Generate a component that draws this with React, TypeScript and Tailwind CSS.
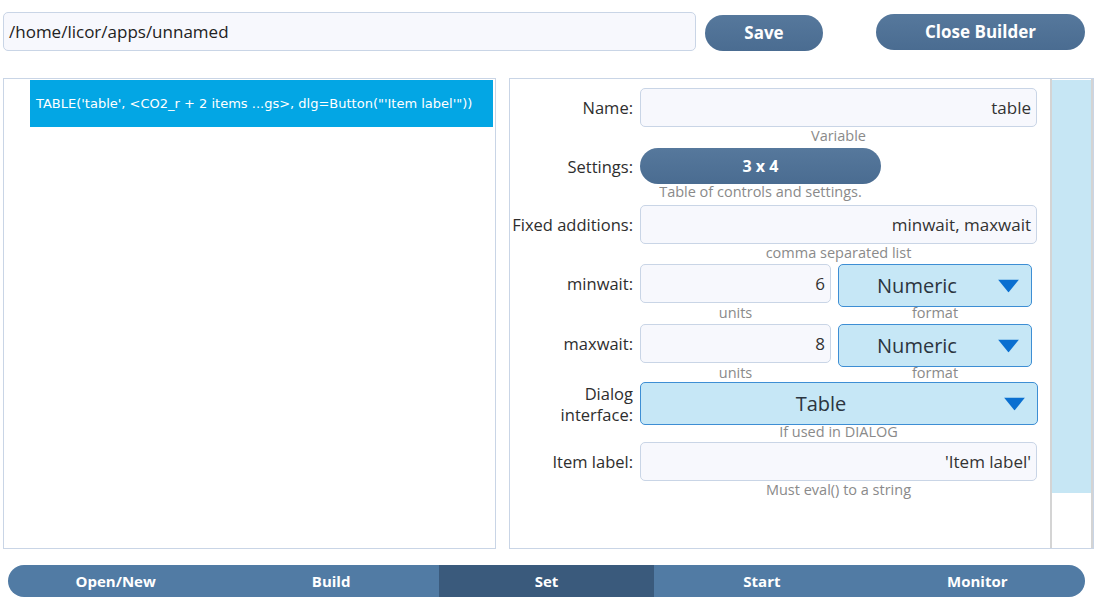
import React from 'react';

const font = { fontFamily: '"Open Sans", "Noto Sans", sans-serif' };

function Hint({ children, className = '' }: { children: React.ReactNode; className?: string }) {
  return <div className={`text-[14.5px] leading-[18px] text-[#8a8a8a] text-center whitespace-nowrap ${className}`}>{children}</div>;
}

function TextBox({ value, className = '' }: { value: string; className?: string }) {
  return (
    <div className={`h-[39px] rounded-[5px] border border-[#c9d5e6] bg-[#f7f8fd] flex items-center justify-end px-[5px] text-[17px] text-[#333] ${className}`}>
      {value}
    </div>
  );
}

function Dropdown({ value, className = '' }: { value: string; className?: string }) {
  return (
    <div className={`relative rounded-[5px] border border-[#3d8ed4] bg-[#c6e7f6] flex items-center justify-center text-[20px] text-[#2b3540] ${className}`}>
      <span className="mr-[36px]">{value}</span>
      <svg className="absolute right-[12px] top-1/2 -translate-y-1/2" width="21" height="13" viewBox="0 0 21 13">
        <polygon points="0,0 21,0 10.5,13" fill="#0a6fd0" />
      </svg>
    </div>
  );
}

function Label({ children }: { children: React.ReactNode }) {
  return <div className="w-[130px] text-right text-[16.5px] leading-[21px] text-[#2e2e2e] pr-[7px] shrink-0 whitespace-nowrap">{children}</div>;
}

export default function App() {
  const tabs = ['Open/New', 'Build', 'Set', 'Start', 'Monitor'];
  return (
    <div className="w-[1095px] h-[602px] bg-white relative overflow-hidden" style={font}>
      {/* top bar */}
      <div className="flex items-center h-[64px] pl-[3px]">
        <div className="w-[693px] h-[39px] mt-[-1px] rounded-[5px] border border-[#c9d5e6] bg-[#f7f8fd] flex items-center pl-[5px] text-[17px] text-[#222]">
          /home/licor/apps/unnamed
        </div>
        <button className="ml-[9px] w-[118px] h-[36px] rounded-full bg-gradient-to-b from-[#56789c] to-[#4a6c91] text-white font-bold text-[17px] mt-[1px]">
          Save
        </button>
        <button className="ml-[53px] w-[209px] h-[36px] rounded-full bg-gradient-to-b from-[#56789c] to-[#4a6c91] text-white font-bold text-[17px] -mt-[1px]">
          Close Builder
        </button>
      </div>

      {/* main */}
      <div className="flex mt-[14px] pl-[3px] h-[471px]">
        <div className="w-[493px] h-full border border-[#c9d5e6] pt-[1px] pl-[26px] pr-[2px]">
          <div className="h-[47px] bg-[#03a6e4] flex items-center pl-[6px] text-white text-[13px] whitespace-nowrap" style={{ fontFamily: '"DejaVu Sans", sans-serif' }}>
            TABLE('table', &lt;CO2_r + 2 items ...gs&gt;, dlg=Button("'Item label'"))
          </div>
        </div>

        <div className="ml-[13px] w-[585px] h-full border border-[#c9d5e6] flex">
          <div className="w-[541px] pt-[9px]">
            {/* Name */}
            <div className="flex items-center">
              <Label>Name:</Label>
              <TextBox value="table" className="w-[397px]" />
            </div>
            <Hint className="ml-[130px] w-[397px]">Variable</Hint>

            {/* Settings */}
            <div className="flex items-center mt-[3px]">
              <Label>Settings:</Label>
              <button className="w-[241px] h-[36px] rounded-full bg-gradient-to-b from-[#56789c] to-[#4a6c91] text-white font-bold text-[16px]">
                3 x 4
              </button>
            </div>
            <Hint className="ml-[130px] w-[241px] -mt-[1px]">Table of controls and settings.</Hint>

            {/* Fixed additions */}
            <div className="flex items-center mt-[4px]">
              <Label>Fixed additions:</Label>
              <TextBox value="minwait, maxwait" className="w-[397px]" />
            </div>
            <Hint className="ml-[130px] w-[397px]">comma separated list</Hint>

            {/* minwait */}
            <div className="flex items-start mt-[2px]">
              <Label><div className="h-[39px] flex items-center justify-end">minwait:</div></Label>
              <div>
                <TextBox value="6" className="w-[191px]" />
                <Hint className="mt-[1px]">units</Hint>
              </div>
              <div className="ml-[7px]">
                <Dropdown value="Numeric" className="w-[194px] h-[43px]" />
                <Hint className="-mt-[3px]">format</Hint>
              </div>
            </div>

            {/* maxwait */}
            <div className="flex items-start mt-[2px]">
              <Label><div className="h-[39px] flex items-center justify-end">maxwait:</div></Label>
              <div>
                <TextBox value="8" className="w-[191px]" />
                <Hint className="mt-[1px]">units</Hint>
              </div>
              <div className="ml-[7px]">
                <Dropdown value="Numeric" className="w-[194px] h-[43px]" />
                <Hint className="-mt-[3px]">format</Hint>
              </div>
            </div>

            {/* Dialog interface */}
            <div className="flex items-center">
              <Label>Dialog<br />interface:</Label>
              <Dropdown value="Table" className="w-[398px] h-[43px]" />
            </div>
            <Hint className="ml-[130px] w-[397px] -mt-[2px]">If used in DIALOG</Hint>

            {/* Item label */}
            <div className="flex items-center mt-[1px]">
              <Label>Item label:</Label>
              <TextBox value="'Item label'" className="w-[397px]" />
            </div>
            <Hint className="ml-[130px] w-[397px]">Must eval() to a string</Hint>
          </div>
          {/* scrollbar */}
          <div className="w-[43px] h-full border-l-2 border-r-2 border-[#d4d4d4] pt-[1px]">
            <div className="h-[413px] bg-[#c6e6f4]" />
          </div>
        </div>
      </div>

      {/* bottom tab bar */}
      <div className="absolute left-[8px] top-[565px] w-[1077px] h-[32px] rounded-full bg-[#517ba4] flex overflow-hidden">
        {tabs.map((t) => (
          <div
            key={t}
            className={`flex-1 flex items-center justify-center text-white font-bold text-[15px] ${t === 'Set' ? 'bg-[#3a5a7c]' : ''}`}
          >
            {t}
          </div>
        ))}
      </div>
    </div>
  );
}
